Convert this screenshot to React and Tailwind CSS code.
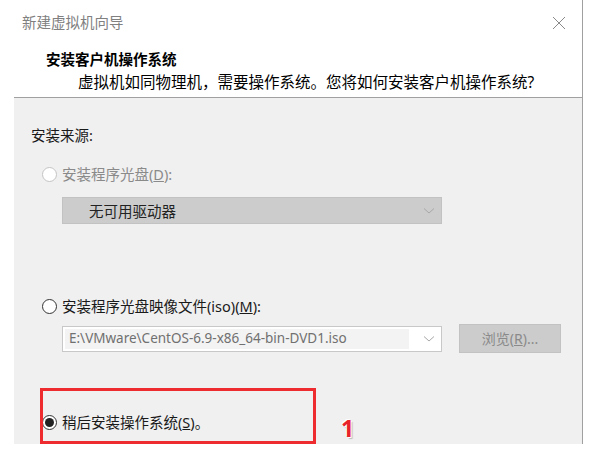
function Radio({ state }) {
  if (state === "disabled") {
    return <span className="w-[15px] h-[15px] rounded-full border border-[#c4c4c4] bg-white shrink-0" />;
  }
  if (state === "checked") {
    return (
      <span className="w-[15px] h-[15px] rounded-full border border-[#333] bg-white shrink-0 flex items-center justify-center">
        <span className="w-[9px] h-[9px] rounded-full bg-[#222]" />
      </span>
    );
  }
  return <span className="w-[15px] h-[15px] rounded-full border border-[#333] bg-white shrink-0" />;
}

function Chevron({ color }) {
  return (
    <svg width="12" height="8" viewBox="0 0 12 8" className="shrink-0">
      <path d="M1 1.5 L6 6 L11 1.5" fill="none" stroke={color} strokeWidth="1" />
    </svg>
  );
}

export default function App() {
  return (
    <div className="w-[592px] h-[456px] bg-white relative overflow-hidden font-['Noto_Sans','Noto_Sans_CJK_SC',sans-serif] text-[14.5px] text-[#1a1a1a]">
      <div className="w-[583px] h-[444px] border-r border-[#a0a0a0] flex flex-col">
        {/* header */}
        <div className="h-[97px] shrink-0 relative">
          <div className="pl-[22px] pt-[12px] text-[#808080] leading-[20px]">新建虚拟机向导</div>
          <svg width="14" height="14" viewBox="0 0 14 14" className="absolute left-[552px] top-[16px]">
            <path d="M1 1 L13 13 M13 1 L1 13" stroke="#8a8a8a" strokeWidth="1" />
          </svg>
          <div className="pl-[46px] pt-[17px] font-bold leading-[20px] text-black">安装客户机操作系统</div>
          <div className="pl-[78px] pt-[3px] text-[15.5px] leading-[20px] text-black">
            虚拟机如同物理机，需要操作系统。您将如何安装客户机操作系统?
          </div>
        </div>

        {/* gray panel */}
        <div className="ml-[14px] flex-1 border-t border-[#a0a0a0] bg-[#f0f0f0] flex flex-col pt-[27px]">
          <div className="pl-[17px] leading-[20px] h-[20px]">安装来源:</div>

          <div className="mt-[19px] h-[20px] flex items-center pl-[28px] gap-[5px] text-[#8a8a8a]">
            <Radio state="disabled" />
            <span className="leading-[20px]">
              安装程序光盘(<span className="underline">D</span>):
            </span>
          </div>

          <div className="mt-[13px] ml-[48px] w-[380px] h-[27px] bg-[#cccccc] border border-[#c2c2c2] flex items-center justify-between pl-[26px] pr-[6px]">
            <span className="leading-[20px] text-[#222]">无可用驱动器</span>
            <Chevron color="#a8a8a8" />
          </div>

          <div className="mt-[72px] h-[20px] flex items-center pl-[28px] gap-[5px]">
            <Radio state="open" />
            <span className="leading-[20px]">
              安装程序光盘映像文件(iso)(<span className="underline">M</span>):
            </span>
          </div>

          <div className="mt-[8px] h-[29px] flex items-center pl-[48px]">
            <div className="w-[380px] h-[26px] bg-white border border-[#c8c8c8] flex items-center p-[2px] pr-[6px]">
              <div className="flex-1 h-full bg-[#f3f3f3] flex items-center pl-[4px] text-[13.5px] text-[#707070] mr-[14px]">
                E:\VMware\CentOS-6.9-x86_64-bin-DVD1.iso
              </div>
              <Chevron color="#a8a8a8" />
            </div>
            <div className="ml-[17px] w-[102px] h-[29px] bg-[#cccccc] border border-[#c2c2c2] flex items-center justify-center text-[#8a8a8a] text-[14px]">
              浏览(<span className="underline">R</span>)...
            </div>
          </div>

          <div className="mt-[59px] h-[20px] flex items-center pl-[28px] gap-[5px]">
            <Radio state="checked" />
            <span className="leading-[20px]">
              稍后安装操作系统(<span className="underline">S</span>)。
            </span>
          </div>
        </div>
      </div>

      {/* annotation */}
      <div className="absolute left-[40px] top-[388px] w-[276px] h-[56px] border-[3px] border-[#ee2b2f]" />
      <div className="absolute left-[341px] top-[414px] text-[23px] font-bold leading-[28px] text-[#e8242a] [text-shadow:1px_1px_0_#fff,-1px_-1px_0_#fff,2px_2px_1px_#bbb]">
        1
      </div>
    </div>
  );
}
